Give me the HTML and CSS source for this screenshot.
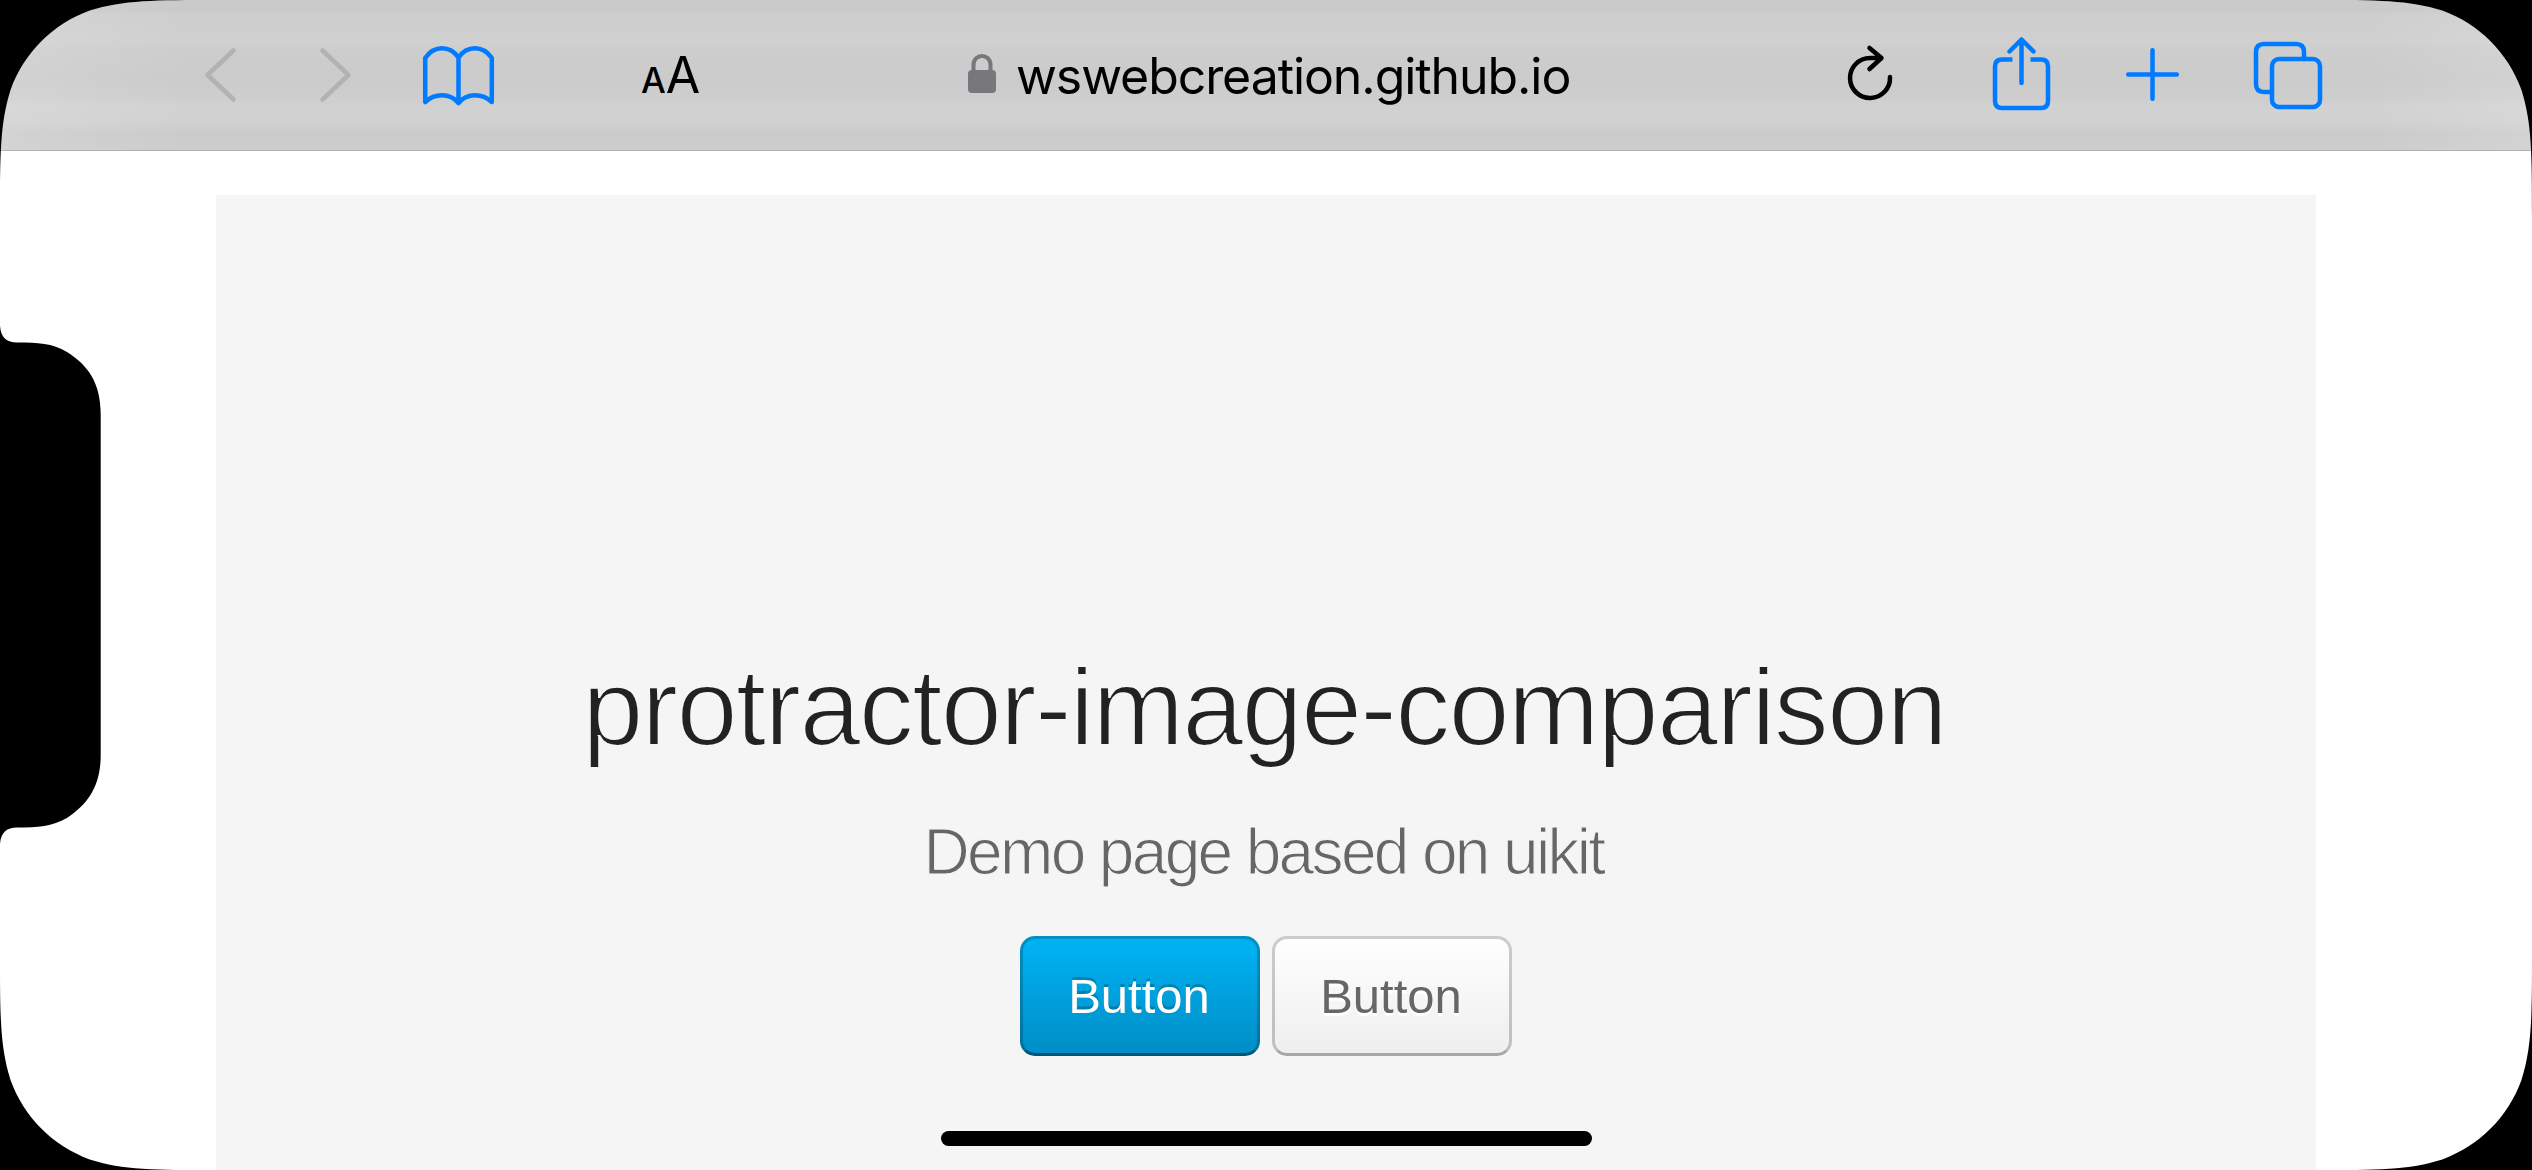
FILE: index.html
```html
<!DOCTYPE html>
<html lang="en">
<head>
<meta charset="utf-8">
<title>protractor-image-comparison</title>
<link rel="stylesheet" href="styles.css">
</head>
<body>
<div class="screen">
  <header class="toolbar">
    <nav class="group">
      <svg class="icon back" width="31" height="54" viewBox="0 0 31 54"><path d="M28.500 2.500 2.500 27l26 24.500"/></svg>
      <svg class="icon forward" width="31" height="54" viewBox="0 0 31 54"><path d="M2.500 2.500 28.500 27l-26 24.500"/></svg>
      <svg class="icon book" width="71" height="60" viewBox="0 0 71 60"><path d="M2.200 56V12C7 5 13 2.200 19 2.200S31 5 35.500 11.500C40 5 46 2.200 52 2.200S64 5 68.800 12V56C64 51.500 58 49.300 52 49.300S40 51.500 35.500 57C31 51.500 25 49.300 19 49.300S7 51.500 2.200 56ZM35.500 11.500V57"/></svg>
    </nav>
    <div class="text-size"><span class="small-a">A</span><span class="large-a">A</span></div>
    <div class="address">
      <svg class="lock" width="28" height="39" viewBox="0 0 28 39"><rect y="16" width="28" height="23" rx="4"/><path d="M5.500 18v-7c0-12 17-12 17 0v7"/></svg>
      <span class="url">wswebcreation.github.io</span>
    </div>
    <svg class="icon reload" width="46" height="56" viewBox="0 0 46 56"><path d="M42 32A20 20 0 1 1 22 13H33M21.500 3 33.500 13 21.500 24"/></svg>
    <nav class="group actions">
      <svg class="icon share" width="57" height="73" viewBox="0 0 57 73"><path stroke-linecap="butt" d="M19.500 22.500H9q-7 0-7 7V64q0 7 7 7H48q7 0 7-7V29.500q0-7-7-7H37.500"/><path d="M28.500 46V3M16.500 14.500 28.500 2.500 40.500 14.500"/></svg>
      <svg class="icon plus" width="53" height="53" viewBox="0 0 53 53"><path d="M26.500 2.200v48.600M2.200 26.500h48.600"/></svg>
      <svg class="icon tabs" width="68" height="67" viewBox="0 0 68 67"><rect x="18" y="17" width="48" height="48" rx="7"/><path d="M18 50H10q-8 0-8-8V10q0-8 8-8H42q8 0 8 8v7"/></svg>
    </nav>
  </header>
  <main class="page">
    <section class="hero">
      <h1 class="title">protractor-image-comparison</h1>
      <p class="lead">Demo page based on uikit</p>
      <div class="buttons">
        <button class="button primary">Button</button>
        <button class="button">Button</button>
      </div>
    </section>
  </main>
  <svg class="bezel" width="2532" height="1170" viewBox="0 0 2532 1170">
    <defs><path id="corner" d="M0 0H217C154.600 0 123.300 0 89.700 10.600 52.900 24 24 52.900 10.600 89.700 0 123.300 0 154.600 0 217Z"/></defs>
    <use href="#corner"/>
    <use href="#corner" transform="matrix(-1 0 0 1 2532 0)"/>
    <use href="#corner" transform="matrix(1 0 0 -1 0 1170)"/>
    <use href="#corner" transform="matrix(-1 0 0 -1 2532 1170)"/>
    <path d="M0 326C1 338 7 342.500 17 342.500 38 342.500 52 343 67 352 88 365 100.700 383 100.700 414V755C100.700 786 88 804 67 818 52 826.500 38 827.500 17 827.500 7 827.500 1 832 0 844Z"/>
  </svg>
  <div class="home-indicator"></div>
</div>
</body>
</html>
```
FILE: styles.css
```css
* { box-sizing: border-box; }
body { margin: 0; background: #000; }
.screen {
  position: relative;
  width: 2532px;
  height: 1170px;
  overflow: hidden;
  display: flex;
  flex-direction: column;
  background: #fff;
}
.toolbar {
  flex: none;
  height: 151px;
  display: flex;
  align-items: flex-start;
  padding-left: 205px;
  border-bottom: 1px solid #b0b0b0;
  background:
    linear-gradient(90deg, rgba(255,255,255,.14), transparent 190px, transparent 2370px, rgba(255,255,255,.14)),
    linear-gradient(#cacaca 0 12px, #cecece 14px, #d0d0d0 42px, #cdcdcd 50px, #cbcbcb 80px, #cecece 98px, #d2d2d2 108px, #d0d0d0 124px, #cbcbcb 132px, #cdcdcd 150px);
}
.group { display: flex; }
.icon {
  display: block;
  flex: none;
  overflow: visible;
  fill: none;
  stroke: #007aff;
  stroke-width: 4.5;
  stroke-linecap: round;
  stroke-linejoin: round;
}
.back, .forward { margin-top: 48px; stroke: #b2b2b4; }
.forward { margin-left: 84px; }
.book { margin: 46px 0 0 72px; }
.text-size {
  width: 58px;
  margin-left: 147px;
  padding-top: 44px;
  display: flex;
  align-items: baseline;
  justify-content: space-between;
  font-family: Inter, sans-serif;
  line-height: 62px;
  color: #000;
}
.small-a { font-size: 35px; font-weight: 500; }
.large-a { font-size: 50px; }
.address { display: flex; margin-left: 269px; width: 620px; }
.lock { display: block; flex: none; margin-top: 54px; fill: #77777c; }
.lock path { fill: none; stroke: #77777c; stroke-width: 4; }
.url {
  margin: 45px 0 0 20px;
  font: 50px/62px Inter, sans-serif;
  letter-spacing: -1.08px;
  white-space: nowrap;
  color: #000;
}
.reload { margin: 45px 0 0 260px; stroke: #000; }
.actions { margin-left: 99px; }
.share { margin-top: 37px; }
.plus { margin: 48px 0 0 76px; }
.tabs { margin: 42px 0 0 75px; }
.page { flex: 1; padding: 44px 216px 0; }
.hero {
  height: 100%;
  background: #f5f5f5;
  display: flex;
  flex-direction: column;
  align-items: center;
  padding-top: 447px;
  font-family: "Liberation Sans", Arial, sans-serif;
}
.title {
  margin: 0 4px 0 0;
  font-size: 110px;
  font-weight: 400;
  line-height: 130px;
  letter-spacing: -1.8px;
  color: #222;
  -webkit-text-stroke: 2.200px #f5f5f5;
}
.lead {
  margin: 35px 5px 0 0;
  font-size: 64px;
  line-height: 90px;
  letter-spacing: -2.65px;
  color: #666;
  -webkit-text-stroke: 1.200px #f5f5f5;
}
.buttons { display: flex; gap: 12px; margin-top: 39px; }
.button {
  width: 240px;
  height: 120px;
  padding: 1px 2px 0 0;
  border: 3px solid rgba(0,0,0,.2);
  border-bottom-color: rgba(0,0,0,.3);
  border-radius: 15px;
  background: #fff linear-gradient(#fff, #eee) border-box;
  font: 49px/113px "Liberation Sans", Arial, sans-serif;
  color: #666;
  text-shadow: 0 3px 0 #fff;
}
.primary {
  border-color: rgba(0,0,0,.2);
  border-bottom-color: rgba(0,0,0,.4);
  background: #009dd8 linear-gradient(#00b4f5, #008dc5) border-box;
  color: #fff;
  text-shadow: 0 -3px 0 rgba(0,0,0,.2);
}
.bezel { position: absolute; inset: 0; }
.home-indicator {
  position: absolute;
  left: 941px;
  bottom: 24px;
  width: 651px;
  height: 15px;
  border-radius: 8px;
  background: #000;
}
```
